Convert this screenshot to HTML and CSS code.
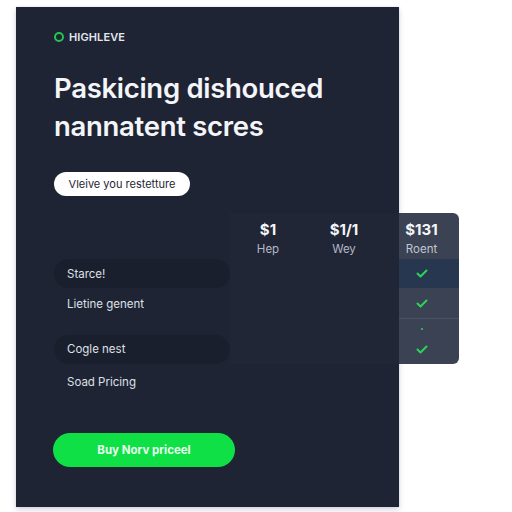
FILE: index.html
```html
<!DOCTYPE html>
<html>
<head>
<meta charset="utf-8">
<link rel="stylesheet" href="styles.css">
</head>
<body>
<div class="card">
  <div class="brand"><span class="dot"></span><span class="brand-name">HIGHLEVE</span></div>
  <h1 class="title">Paskicing dishouced<br>nannatent scres</h1>
  <div class="pill-btn">Vleive you restetture</div>

  <div class="pricing">
    <div class="cell feat-head"></div>
    <div class="cell col-head c1"><span class="price">$1</span><span class="plan">Hep</span></div>
    <div class="cell col-head c2"><span class="price">$1/1</span><span class="plan">Wey</span></div>
    <div class="cell col-head hl hl-top"><span class="price">$131</span><span class="plan">Roent</span></div>

    <div class="cell feat"><span class="feat-pill">Starce!</span></div>
    <div class="cell c1"></div>
    <div class="cell c2"></div>
    <div class="cell hl hl-row1"><svg class="check" viewBox="0 0 12 9"><path d="M1.5 4.5 L4.5 7.5 L10.5 1.5"/></svg></div>

    <div class="cell feat"><span class="feat-plain">Lietine genent</span></div>
    <div class="cell c1"></div>
    <div class="cell c2"></div>
    <div class="cell hl hl-row2"><svg class="check" viewBox="0 0 12 9"><path d="M1.5 4.5 L4.5 7.5 L10.5 1.5"/></svg></div>

    <div class="cell feat"></div>
    <div class="cell c1"></div>
    <div class="cell c2"></div>
    <div class="cell hl hl-gap"><span class="tiny"></span></div>

    <div class="cell feat"><span class="feat-pill">Cogle nest</span></div>
    <div class="cell c1"></div>
    <div class="cell c2"></div>
    <div class="cell hl hl-bottom"><svg class="check" viewBox="0 0 12 9"><path d="M1.5 4.5 L4.5 7.5 L10.5 1.5"/></svg></div>

    <div class="cell feat"><span class="feat-plain">Soad Pricing</span></div>
    <div class="cell"></div>
    <div class="cell"></div>
    <div class="cell"></div>
  </div>

  <div class="buy">Buy Norv priceel</div>
</div>
</body>
</html>
```

FILE: styles.css
```css
* { box-sizing: border-box; }
html, body { margin: 0; padding: 0; background: #ffffff; }
body {
  font-family: Inter, "Noto Sans", "DejaVu Sans", sans-serif;
  width: 512px;
  height: 512px;
  overflow: hidden;
}
.card {
  margin: 7px 0 0 16px;
  width: 383px;
  height: 500px;
  background: #1f2434;
  padding: 24px 0 0 38px;
  box-shadow: 0 3px 6px rgba(40, 50, 100, 0.18), 0 0 2px rgba(40, 50, 100, 0.12);
}
.brand {
  display: flex;
  align-items: center;
  height: 12px;
  gap: 5px;
}
.dot {
  width: 10px;
  height: 10px;
  border: 2px solid #23c552;
  border-radius: 50%;
}
.brand-name {
  font-size: 11px;
  font-weight: 600;
  color: #e4e7ee;
  letter-spacing: 0.1px;
}
.title {
  margin: 26px 0 0 0;
  font-size: 27.5px;
  line-height: 38px;
  font-weight: 600;
  color: #f4f5f8;
  letter-spacing: -0.3px;
}
.pill-btn {
  margin-top: 27px;
  width: 136px;
  height: 24px;
  border-radius: 12px;
  background: #ffffff;
  color: #1f2434;
  font-size: 11px;
  display: flex;
  align-items: center;
  justify-content: center;
}
.pricing {
  margin-top: 17px;
  display: grid;
  grid-template-columns: 176px 76px 93px 60px;
  grid-template-rows: 46px 29px 31px 15px 30px 36px;
}
.cell { display: flex; align-items: center; }
.c1, .c2 { background: rgba(255, 255, 255, 0.012); }
.col-head {
  flex-direction: column;
  justify-content: flex-start;
  padding-top: 6px;
}
.c2 { padding-right: 17px; justify-content: center; }
.c1 { justify-content: center; }
.price {
  font-size: 15px;
  line-height: 18px;
  font-weight: 700;
  color: #f4f5f8;
}
.plan {
  margin-top: 2px;
  font-size: 11.5px;
  line-height: 16px;
  color: #b3b8c4;
}
.hl {
  background: #3a4253;
  justify-content: center;
  padding-right: 15px;
}
.hl .plan { color: #c2c6d0; }
.hl-top { border-top-right-radius: 6px; }
.hl-row1 { background: #283750; }
.hl-row2 { border-bottom: 1px solid #4a5366; }
.hl-bottom { border-bottom-right-radius: 6px; }
.hl-gap { align-items: flex-start; padding-top: 9px; }
.tiny { width: 2px; height: 2px; background: #2fd35a; border-radius: 1px; }
.check {
  width: 12px;
  height: 9px;
  fill: none;
  stroke: #2bd35a;
  stroke-width: 2;
  stroke-linecap: round;
  stroke-linejoin: round;
}
.feat { align-items: center; }
.feat-pill {
  width: 176px;
  height: 29px;
  border-radius: 15px;
  background: #1a1f2d;
  display: flex;
  align-items: center;
  padding-left: 13px;
  font-size: 11.5px;
  color: #dde0e7;
}
.feat-plain {
  padding-left: 13px;
  font-size: 11.5px;
  color: #dde0e7;
}
.buy {
  margin-top: 33px;
  margin-left: -1px;
  width: 182px;
  height: 34px;
  border-radius: 17px;
  background: #0ee046;
  color: #e9fff0;
  font-size: 11.5px;
  font-weight: 700;
  display: flex;
  align-items: center;
  justify-content: center;
}
```
